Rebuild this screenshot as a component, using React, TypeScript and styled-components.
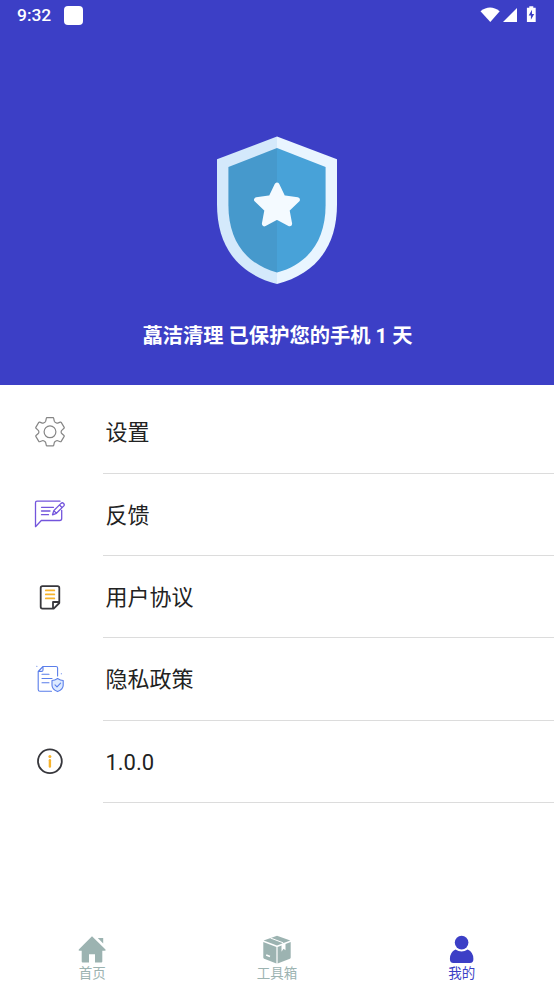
import React from "react";
import styled, { createGlobalStyle } from "styled-components";

const GlobalStyle = createGlobalStyle`
  * { box-sizing: border-box; }
  body { margin: 0; background: #fff; font-family: Roboto, "Noto Sans CJK SC", sans-serif; }
  svg { display: block; flex: none; }
`;

const Screen = styled.div`
  width: 554px;
  height: 984px;
  display: flex;
  flex-direction: column;
  overflow: hidden;
  background: #fff;
`;

const Hero = styled.header`
  height: 385px;
  flex: none;
  display: flex;
  flex-direction: column;
  align-items: center;
  background: #3c3fc6;
  color: #fff;
`;

const StatusBar = styled.div`
  width: 100%;
  height: 30px;
  padding: 0 17px;
  display: flex;
  align-items: center;
`;

const Clock = styled.span`
  width: 47px;
  font-size: 17.4px;
  font-weight: 500;
  line-height: 30px;
`;

const AppBadge = styled.span`
  width: 19px;
  height: 19px;
  border-radius: 4px;
  background: #fff;
`;

const StatusIcons = styled.div`
  margin-left: auto;
`;

const ShieldWrap = styled.div`
  margin-top: 106px;
`;

const Title = styled.h1`
  margin: 37px 0 0;
  padding-left: 1px;
  font-size: 20.3px;
  line-height: 30px;
  font-weight: 700;
  white-space: nowrap;
`;

const Menu = styled.main`
  flex: 1;
  padding-top: 6.4px;
`;

const Row = styled.div`
  height: 82.35px;
  display: flex;
`;

const IconCell = styled.div`
  width: 103px;
  flex: none;
  padding: 20.6px 0 0 30px;
`;

const RowLabel = styled.div`
  flex: 1;
  padding-left: 2.4px;
  border-bottom: 1px solid #dcdcdc;
  color: #222;
  font-size: 22px;
  line-height: 83px;
`;

const TabBar = styled.nav`
  height: 66px;
  flex: none;
  display: grid;
  grid-template-columns: repeat(3, 1fr);
`;

const Tab = styled.div<{ $active?: boolean }>`
  display: flex;
  flex-direction: column;
  align-items: center;
  padding-top: 16px;
  color: ${(p) => (p.$active ? "#3c3fc6" : "#9cb3b1")};
`;

const TabLabel = styled.span`
  font-size: 13.5px;
  line-height: 18px;
`;

const Signals = () => (
  <svg width="57" height="20" viewBox="480 5 57 20" fill="#fff">
    <path d="M480.5 11.2Q490 3.7 499.7 11.2L490.3 22Z" />
    <path d="M517 8V22H503Z" />
    <path d="M529.3 6.3h4v1.5h2.4v14.3h-8.8V7.8h2.4Z" />
    <path d="m532 9.8-3.3 5.6h2.2v4.3l3.3-5.7H532Z" fill="#3c3fc6" />
  </svg>
);

const Shield = () => (
  <svg width="120" height="148" viewBox="217 136 120 148">
    <path d="M277 136.6 217 159.2V204C217 248 239 274 277 284Z" fill="#d4e9fb" />
    <path d="M277 136.6 337 159.2V204C337 248 315 274 277 284Z" fill="#e9f5ff" />
    <path d="M277 148 228.4 167V205C228.4 241 246 264 277 272.6Z" fill="#4699cc" />
    <path d="M277 148 325.6 167V205C325.6 241 308 264 277 272.6Z" fill="#48a2d8" />
    <path
      d="m277 185 6.1 12.8 14.3 2-10.4 9.9 2.6 14.1-12.6-6.8-12.6 6.8 2.6-14.1-10.4-9.9 14.3-2Z"
      fill="#f4faff" stroke="#f4faff" strokeWidth="5" strokeLinejoin="round"
    />
  </svg>
);

const Gear = () => (
  <svg width="40" height="40" viewBox="30 412 40 40" fill="none" stroke="#858585" strokeWidth="1.2" strokeLinejoin="round">
    <path d="M47 417.7h6q.6 0 .7.6l.6 2.9q.2.7.8 1l1.4.8q.6.3 1.2.1l2.6-1q.6-.2.9.3l3 5q.3.5-.2.9l-2 1.8q-.9.8-.9 1.8t.9 1.8l2 1.8q.5.4.2.9l-3 5q-.3.5-.9.3l-2.6-1q-.6-.2-1.2.1l-1.4.8q-.6.3-.8 1l-.6 2.7q-.1.6-.7.6h-6q-.6 0-.7-.6l-.6-2.7q-.2-.7-.8-1l-1.4-.8q-.6-.3-1.2-.1l-2.6 1q-.6.2-.9-.3l-3-5q-.3-.5.2-.9l2-1.8q.9-.8.9-1.8t-.9-1.8l-2-1.8q-.5-.4-.2-.9l3-5q.3-.5.9-.3l2.6 1q.6.2 1.2-.1l1.4-.8q.6-.3.8-1l.6-2.9q.1-.6.7-.6Z" />
    <circle cx="50" cy="431.8" r="5.9" />
  </svg>
);

const Feedback = () => (
  <svg width="40" height="40" viewBox="30 494 40 40" fill="none" stroke="#7355dc" strokeWidth="1.3" strokeLinecap="round" strokeLinejoin="round">
    <path d="M60 501.2H37q-1.5 0-1.5 1.5v24l5.8-6.2h18.4q2 0 2-2v-8.2M41.5 507.3h12M41.5 511h8.5M41.5 514.7h7" />
    <path d="m52.5 514.8 1.3-4.2 7.2-7.2q1.3-1.2 2.6 0t0 2.7l-7.2 7.2ZM59.5 505l2.5 2.5M53.8 510.6l2.6 2.7" />
  </svg>
);

const Agreement = () => (
  <svg width="40" height="40" viewBox="30 576 40 40" fill="none" strokeWidth="1.8" strokeLinecap="round" strokeLinejoin="round">
    <path d="M42.5 585.2h15q1.8 0 1.8 1.8v15l-5.6 5.6H42.5q-1.8 0-1.8-1.8V587q0-1.8 1.8-1.8ZM53 607v-6h6" stroke="#37373c" />
    <path d="M45.8 589.4h8.5M45.8 593.4h8.5M45.8 597.4h8.5" stroke="#f7b32b" />
  </svg>
);

const Privacy = () => (
  <svg width="40" height="40" viewBox="30 659 40 40" fill="none" stroke="#5a7eea" strokeWidth="1.1" strokeLinecap="round" strokeLinejoin="round">
    <path d="M51.5 691.3H40q-1.8 0-1.8-1.8V671.5l4.8-5h13q1.6 0 1.6 1.6V676M38.5 671.4h3q1.5 0 1.5-1.5v-3M42 674.3h7M42 678.5h10M42 682.7h7" />
    <path d="M57.6 678.5q2.8 2 5.6 2v4.7q0 4-5.6 6.4-5.6-2.4-5.6-6.4v-4.7q2.8 0 5.6-2Z" fill="#dceaff" />
    <path d="m55 684.8 2 2 3.6-3.6" />
    <path d="M36.8 666.2h.1M61.3 673.7h.1" />
  </svg>
);

const Info = () => (
  <svg width="40" height="40" viewBox="30 741 40 40">
    <circle cx="49.9" cy="761.3" r="11.9" fill="none" stroke="#37373c" strokeWidth="1.8" />
    <circle cx="49.9" cy="756.5" r="1.5" fill="#f7b32b" />
    <path d="M49.9 760.2v6.3" stroke="#f7b32b" strokeWidth="2.4" strokeLinecap="round" />
  </svg>
);

const Home = () => (
  <svg width="30" height="30" viewBox="77 934 30 30" fill="currentColor">
    <path d="M92 936.3 78.8 949.6q-.8 1.2 1 1.2h1.9v10.8q0 1 1 1H89v-8.3h6v8.3h6.3q1 0 1-1v-10.8h2.2q1.8 0 1-1.2ZM97.8 938h5.4v5.6Z" />
  </svg>
);

const Toolbox = () => (
  <svg width="30" height="30" viewBox="262 934 30 30" fill="currentColor">
    <path d="m277 935.8 13.3 4.8L277 945.6l-13.4-5Z" />
    <path d="M263.3 941.9l13.1 5.1v16.4l-12.2-4.7q-.9-.3-.9-1.2ZM290.7 941.9l-13.1 5.1v16.4l12.3-4.7q.8-.3.8-1.2Z" />
    <path d="m270.5 938 12.6 4.8v3" stroke="#fff" strokeWidth="1" fill="none" />
    <path d="m281.5 945.1 4-1.5v6.6l-2-1.4-2 2.9Z" fill="#fff" />
    <path d="m266.2 955 3.8 1.4" stroke="#fff" strokeWidth="1.6" />
  </svg>
);

const Person = () => (
  <svg width="30" height="30" viewBox="447 934 30 30" fill="currentColor">
    <circle cx="461.6" cy="942.6" r="6.8" />
    <path d="M455.5 949.6q6 3.8 12.2 0 5.7 2.7 5.7 9.4 0 4-3.5 4h-16.5q-3.5 0-3.5-4 0-6.7 5.6-9.4Z" />
  </svg>
);

const items = [
  { label: "设置", Icon: Gear },
  { label: "反馈", Icon: Feedback },
  { label: "用户协议", Icon: Agreement },
  { label: "隐私政策", Icon: Privacy },
  { label: "1.0.0", Icon: Info },
];

const tabs = [
  { label: "首页", Icon: Home },
  { label: "工具箱", Icon: Toolbox },
  { label: "我的", Icon: Person, active: true },
];

export default function App() {
  return (
    <Screen>
      <GlobalStyle />
      <Hero>
        <StatusBar>
          <Clock>9:32</Clock>
          <AppBadge />
          <StatusIcons><Signals /></StatusIcons>
        </StatusBar>
        <ShieldWrap><Shield /></ShieldWrap>
        <Title>藠洁清理 已保护您的手机 1 天</Title>
      </Hero>
      <Menu>
        {items.map(({ label, Icon }) => (
          <Row key={label}>
            <IconCell><Icon /></IconCell>
            <RowLabel>{label}</RowLabel>
          </Row>
        ))}
      </Menu>
      <TabBar>
        {tabs.map(({ label, Icon, active }) => (
          <Tab key={label} $active={active}>
            <Icon />
            <TabLabel>{label}</TabLabel>
          </Tab>
        ))}
      </TabBar>
    </Screen>
  );
}
